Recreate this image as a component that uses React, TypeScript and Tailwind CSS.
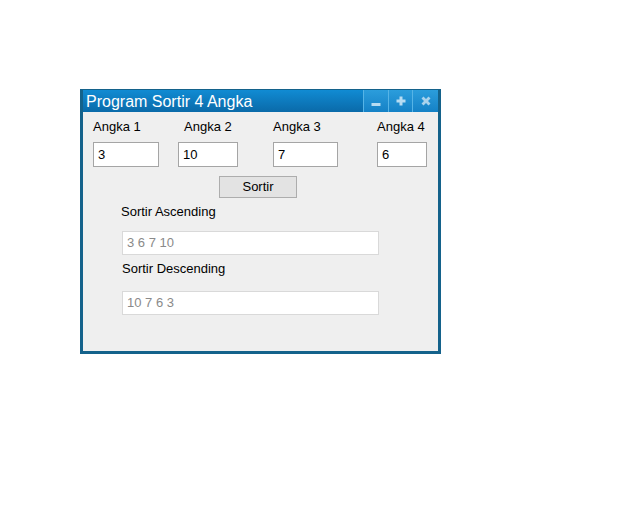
import React from 'react';

const font = { fontFamily: '"Liberation Sans", Arial, sans-serif' };

const TitleButton: React.FC<{ kind: 'min' | 'max' | 'close'; w: string }> = ({ kind, w }) => (
  <div className={`${w} h-full flex items-center justify-center bg-gradient-to-b from-[#2b9ddc] to-[#1481c6] border-l border-[#56b4e6]`}>
    <svg width="12" height="12" viewBox="0 0 12 12">
      {kind === 'min' && <rect x="1.5" y="8" width="9" height="3" fill="#b7dcf2" />}
      {kind === 'max' && (
        <path d="M4.5 1.5h3v3h3v3h-3v3h-3v-3h-3v-3h3z" fill="#b7dcf2" />
      )}
      {kind === 'close' && (
        <path d="M1.5 3.5l2-2L6 4l2.5-2.5 2 2L8 6l2.5 2.5-2 2L6 8l-2.5 2.5-2-2L4 6z" fill="#a9d2ec" />
      )}
    </svg>
  </div>
);

export default function App() {
  const nums = [3, 10, 7, 6];
  const asc = [...nums].sort((a, b) => a - b).join(' ');
  const desc = [...nums].sort((a, b) => b - a).join(' ');

  return (
    <div className="w-[619px] h-[526px] bg-white pt-[89px] pl-[80px]" style={font}>
      <div className="w-[361px] h-[265px] border-[3px] border-t border-[#14628b] flex flex-col">
        {/* title bar */}
        <div className="h-[22px] flex bg-gradient-to-b from-[#118bd3] to-[#0a6aa9]">
          <div className="flex-1 pl-[3px] pt-[1px] text-white text-[16px] leading-[22px]">Program Sortir 4 Angka</div>
          <div className="flex h-[22px]">
            <TitleButton kind="min" w="w-[25px]" />
            <TitleButton kind="max" w="w-[24px]" />
            <TitleButton kind="close" w="w-[26px]" />
          </div>
        </div>

        {/* body */}
        <div className="flex-1 bg-[#efefef] text-[13px] text-black">
          <div className="flex h-[15px] mt-[7px] leading-[15px] pl-[10px]">
            <span className="w-[91px]">Angka 1</span>
            <span className="w-[89px]">Angka 2</span>
            <span className="w-[104px]">Angka 3</span>
            <span>Angka 4</span>
          </div>
          <div className="flex h-[25px] mt-[8px] pl-[10px]">
            <div className="w-[66px] h-[25px] bg-white border border-[#a5a5a5] pl-[4px] leading-[23px]">3</div>
            <div className="w-[60px] h-[25px] ml-[19px] bg-white border border-[#a5a5a5] pl-[4px] leading-[23px]">10</div>
            <div className="w-[65px] h-[25px] ml-[35px] bg-white border border-[#a5a5a5] pl-[4px] leading-[23px]">7</div>
            <div className="w-[50px] h-[25px] ml-[39px] bg-white border border-[#a5a5a5] pl-[4px] leading-[23px]">6</div>
          </div>
          <div className="mt-[9px] ml-[136px] w-[78px] h-[22px] bg-[#e3e3e3] border border-[#adadad] text-center leading-[20px]">
            Sortir
          </div>
          <div className="mt-[6px] ml-[38px] h-[15px] leading-[15px]">Sortir Ascending</div>
          <div className="mt-[12px] ml-[39px] w-[257px] h-[24px] bg-white border border-[#d9d9d9] pl-[4px] leading-[22px] text-[#8a8a8a]">
            {asc}
          </div>
          <div className="mt-[6px] ml-[39px] h-[15px] leading-[15px]">Sortir Descending</div>
          <div className="mt-[15px] ml-[39px] w-[257px] h-[24px] bg-white border border-[#d9d9d9] pl-[4px] leading-[22px] text-[#8a8a8a]">
            {desc}
          </div>
        </div>
      </div>
    </div>
  );
}
